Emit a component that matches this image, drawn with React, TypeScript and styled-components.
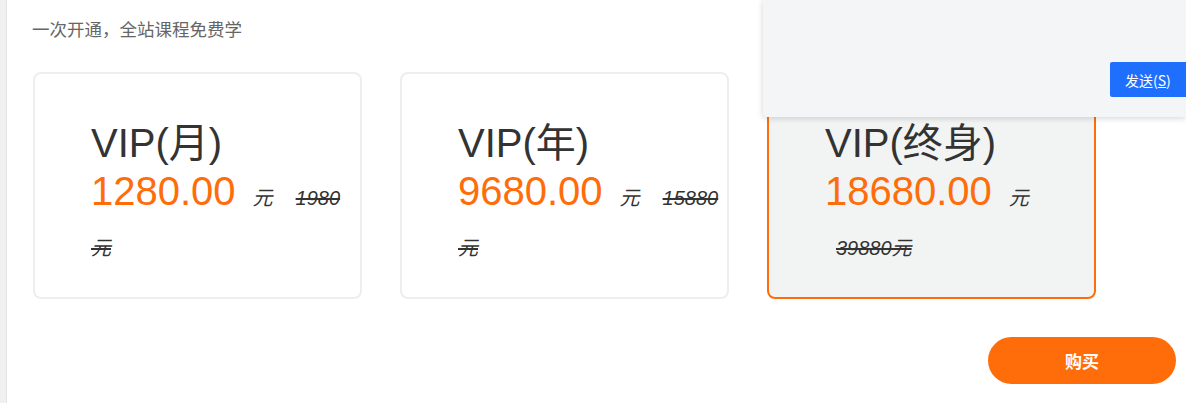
import React from "react";
import styled, { createGlobalStyle } from "styled-components";

const GlobalStyle = createGlobalStyle`
  html, body {
    margin: 0;
    padding: 0;
    background: #ffffff;
    overflow: hidden;
  }
  body {
    font-family: "Liberation Sans", "Noto Sans CJK SC", sans-serif;
    color: #333333;
  }
`;

const Page = styled.div`
  position: relative;
  display: flex;
  width: 1186px;
  height: 403px;
  overflow: hidden;
`;

const SideStrip = styled.div`
  width: 6px;
  flex: 0 0 6px;
  background: #f0f0f0;
  border-right: 1px solid #e3e3e3;
`;

const Main = styled.div`
  flex: 1;
  display: flex;
  flex-direction: column;
  padding: 18px 10px 0 25px;
`;

const Subtitle = styled.p`
  margin: 0;
  font-size: 17.5px;
  line-height: 24px;
  color: #666666;
`;

const CardRow = styled.div`
  display: flex;
  gap: 38px;
  margin-top: 30px;
  padding-left: 1px;
`;

const Card = styled.div<{ $active?: boolean }>`
  box-sizing: border-box;
  width: 329px;
  height: 227px;
  padding: 45px 4px 0 56px;
  border: 2px solid ${(p) => (p.$active ? "#ff6d0a" : "#eeeeee")};
  background: ${(p) => (p.$active ? "#f2f4f4" : "#ffffff")};
  border-radius: 8px;
`;

const PlanTitle = styled.div`
  font-size: 40px;
  line-height: 48px;
  color: #333333;
  white-space: nowrap;
`;

const PriceLine = styled.div`
  line-height: 48px;
`;

const Price = styled.span`
  font-size: 40px;
  color: #ff6d0a;
`;

const Unit = styled.span`
  font-size: 20px;
  font-style: italic;
  color: #333333;
  margin-left: 17px;
  margin-right: 12px;
`;

const Original = styled.del`
  font-size: 20px;
  font-style: italic;
  color: #333333;
  margin-left: 11px;
`;

const BuyRow = styled.div`
  display: flex;
  justify-content: flex-end;
  margin-top: 38px;
`;

const BuyButton = styled.button`
  width: 188px;
  height: 47px;
  border: none;
  border-radius: 24px;
  background: #ff6d0a;
  color: #ffffff;
  font-family: "Noto Sans CJK SC", sans-serif;
  font-size: 17px;
  font-weight: 700;
  cursor: pointer;
`;

const ChatPanel = styled.div`
  position: absolute;
  top: 0;
  left: 763px;
  right: 0;
  height: 117px;
  box-sizing: border-box;
  background: #f4f5f7;
  border-bottom-left-radius: 4px;
  box-shadow: 0 1px 6px rgba(0, 0, 0, 0.18);
  display: flex;
  align-items: flex-end;
  justify-content: flex-end;
  padding-bottom: 20px;
`;

const SendButton = styled.button`
  width: 76px;
  height: 35px;
  padding: 0 0 0 15px;
  text-align: left;
  border: none;
  border-radius: 2px 0 0 2px;
  background: #1f6fff;
  color: #ffffff;
  font-family: "Noto Sans CJK SC", sans-serif;
  font-size: 14px;
  cursor: pointer;
`;

const Key = styled.span`
  text-decoration: underline;
`;

type Plan = {
  name: string;
  price: string;
  original: string;
  active?: boolean;
};

const plans: Plan[] = [
  { name: "VIP(月)", price: "1280.00", original: "1980 元" },
  { name: "VIP(年)", price: "9680.00", original: "15880 元" },
  { name: "VIP(终身)", price: "18680.00", original: "39880元", active: true },
];

export default function App() {
  return (
    <>
      <GlobalStyle />
      <Page>
        <SideStrip />
        <Main>
          <Subtitle>一次开通，全站课程免费学</Subtitle>
          <CardRow>
            {plans.map((p) => (
              <Card key={p.name} $active={p.active}>
                <PlanTitle>{p.name}</PlanTitle>
                <PriceLine>
                  <Price>{p.price}</Price>
                  <Unit>元</Unit>
                  <Original>{p.original}</Original>
                </PriceLine>
              </Card>
            ))}
          </CardRow>
          <BuyRow>
            <BuyButton>购买</BuyButton>
          </BuyRow>
        </Main>
        <ChatPanel>
          <SendButton>
            发送(<Key>S</Key>)
          </SendButton>
        </ChatPanel>
      </Page>
    </>
  );
}
